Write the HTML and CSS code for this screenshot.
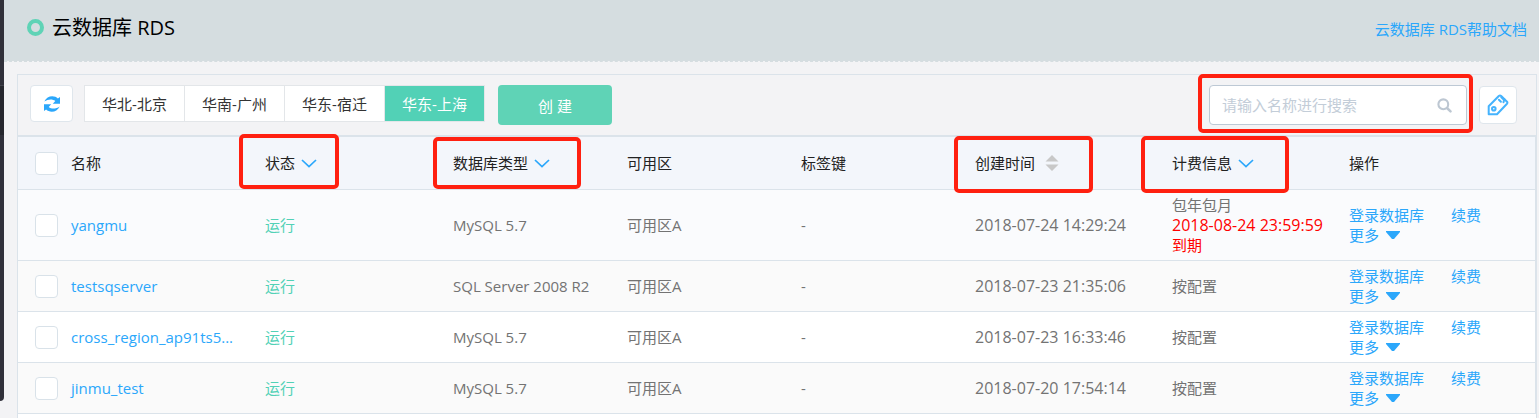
FILE: index.html
```html
<!DOCTYPE html>
<html lang="zh-CN">
<head>
<meta charset="utf-8">
<title>云数据库 RDS</title>
<link rel="stylesheet" href="styles.css">
</head>
<body>
<svg class="symbols" aria-hidden="true">
  <symbol id="chevron" viewBox="0 0 16 9"><path d="M1 1 8 7.6 15 1" fill="none" stroke="currentColor" stroke-width="1.7"/></symbol>
  <symbol id="caret" viewBox="0 0 14 8"><path d="M0 0H14V1L8 8H6L0 1Z" fill="currentColor"/></symbol>
</svg>
<div class="app">
  <aside class="rail"><div class="rail-active"></div></aside>
  <div class="page">
    <header class="header">
      <span class="ring"></span>
      <h1 class="title">云数据库 RDS</h1>
      <a class="help" href="#">云数据库 RDS帮助文档</a>
    </header>
    <main class="panel">
      <div class="toolbar">
        <button class="icon-button refresh" type="button" aria-label="刷新">
          <svg width="16" height="16" viewBox="0 0 16 16" fill="#2ba7fb"><path d="M.3 5.500C2 2 5 .300 8.200.300c2.300 0 4.300.700 5.700 2.100L16 1v6.700H8.800L11.300 5C8.500 2.800 4 3 .300 5.500Z"/><path d="M15.700 10.500C14 14 11 15.700 7.800 15.700c-2.300 0-4.300-.7-5.700-2.100L0 15V8.300H7.200L4.700 11C7.500 13.200 12 13 15.700 10.500Z"/></svg>
        </button>
        <div class="regions">
          <button class="region" type="button">华北-北京</button>
          <button class="region" type="button">华南-广州</button>
          <button class="region" type="button">华东-宿迁</button>
          <button class="region region-active" type="button">华东-上海</button>
        </div>
        <button class="create" type="button">创 建</button>
        <div class="search">
          <input class="search-input" type="text" placeholder="请输入名称进行搜索" aria-label="请输入名称进行搜索">
          <svg class="search-icon" width="15" height="15" viewBox="0 0 15 15" fill="none" stroke="#bdc7d2" stroke-linecap="round"><circle cx="6.300" cy="6.300" r="4.900" stroke-width="2.100"/><path d="M10 10 13.500 13.400" stroke-width="2.500"/></svg>
          <span class="mark mark-search"></span>
        </div>
        <button class="icon-button tag" type="button" aria-label="标签">
          <svg width="22" height="22" viewBox="0 0 22 22" fill="none" stroke="#45b3fd" stroke-width="2" stroke-linejoin="round" stroke-linecap="round"><path d="M1.700 12.300 11.800 2Q13 1 14.200 2L20 7.700Q20.800 8.700 20 9.700L10 20.300H1.700Z"/><circle cx="6.800" cy="14.800" r="1.800"/><path d="M11.900 5.800 13.900 7.800M14.300 3.200 17.500 6.400M17.300 5 16.500 8.300"/></svg>
        </button>
      </div>
      <table class="table">
        <colgroup><col class="c-check"><col class="c-name"><col class="c-status"><col class="c-mid"><col class="c-mid"><col class="c-mid"><col class="c-time"><col class="c-bill"><col></colgroup>
        <thead>
          <tr>
            <th class="check"><input class="box" type="checkbox" aria-label="全选"></th>
            <th>名称</th>
            <th><button class="filter" type="button">状态<svg class="chevron"><use href="#chevron"/></svg></button><span class="mark mark-status"></span></th>
            <th><button class="filter" type="button">数据库类型<svg class="chevron"><use href="#chevron"/></svg></button><span class="mark mark-type"></span></th>
            <th>可用区</th>
            <th>标签键</th>
            <th><button class="filter sort" type="button">创建时间<svg width="14" height="16" viewBox="0 0 14 16" fill="#c8c8c8"><path d="M7 0 13.500 6.500H.5ZM7 16 .5 9.500H13.500Z"/></svg></button><span class="mark mark-time"></span></th>
            <th><button class="filter" type="button">计费信息<svg class="chevron"><use href="#chevron"/></svg></button><span class="mark mark-bill"></span></th>
            <th>操作</th>
          </tr>
        </thead>
        <tbody>
          <tr class="hover">
            <td class="check"><input class="box" type="checkbox" aria-label="yangmu"></td>
            <td><a href="#">yangmu</a></td>
            <td class="running">运行</td>
            <td>MySQL 5.7</td>
            <td>可用区A</td>
            <td>-</td>
            <td class="time">2018-07-24 14:29:24</td>
            <td>包年包月<br><span class="time expires">2018-08-24 23:59:59</span><br><span class="expires">到期</span></td>
            <td><div class="actions"><a href="#">登录数据库</a><a href="#">续费</a></div><a class="more" href="#">更多<svg class="caret"><use href="#caret"/></svg></a></td>
          </tr>
          <tr>
            <td class="check"><input class="box" type="checkbox" aria-label="testsqserver"></td>
            <td><a href="#">testsqserver</a></td>
            <td class="running">运行</td>
            <td>SQL Server 2008 R2</td>
            <td>可用区A</td>
            <td>-</td>
            <td class="time">2018-07-23 21:35:06</td>
            <td>按配置</td>
            <td><div class="actions"><a href="#">登录数据库</a><a href="#">续费</a></div><a class="more" href="#">更多<svg class="caret"><use href="#caret"/></svg></a></td>
          </tr>
          <tr>
            <td class="check"><input class="box" type="checkbox" aria-label="cross_region_ap91ts5..."></td>
            <td><a href="#">cross_region_ap91ts5...</a></td>
            <td class="running">运行</td>
            <td>MySQL 5.7</td>
            <td>可用区A</td>
            <td>-</td>
            <td class="time">2018-07-23 16:33:46</td>
            <td>按配置</td>
            <td><div class="actions"><a href="#">登录数据库</a><a href="#">续费</a></div><a class="more" href="#">更多<svg class="caret"><use href="#caret"/></svg></a></td>
          </tr>
          <tr>
            <td class="check"><input class="box" type="checkbox" aria-label="jinmu_test"></td>
            <td><a href="#">jinmu_test</a></td>
            <td class="running">运行</td>
            <td>MySQL 5.7</td>
            <td>可用区A</td>
            <td>-</td>
            <td class="time">2018-07-20 17:54:14</td>
            <td>按配置</td>
            <td><div class="actions"><a href="#">登录数据库</a><a href="#">续费</a></div><a class="more" href="#">更多<svg class="caret"><use href="#caret"/></svg></a></td>
          </tr>
        </tbody>
      </table>
    </main>
  </div>
</div>
</body>
</html>
```

FILE: styles.css
```css
* { box-sizing: border-box; }
body {
  margin: 0;
  background: #f3f3f5;
  color: #737373;
  font: 15px/20px "Open Sans", "Noto Sans CJK SC", sans-serif;
}
button, input { font: inherit; margin: 0; }
button { padding: 0; cursor: pointer; }
a { color: #2ba7fb; text-decoration: none; }
svg { display: block; flex: none; }
.symbols { position: absolute; width: 0; height: 0; }

.app { display: flex; min-height: 100vh; }
.rail {
  flex: none;
  width: 4px;
  margin-bottom: 17px;
  padding-top: 85px;
  background: #30303a;
  border-bottom-right-radius: 4px;
}
.rail-active { height: 50px; background: #26272e; border-top: 1px solid #42434c; }
.page { display: flex; flex: 1; flex-direction: column; min-width: 0; }

.header {
  display: flex;
  align-items: center;
  height: 62px;
  padding: 0 12px 6px 23px;
  background: #d5dde0;
  background-clip: padding-box;
  border-bottom: 1px dashed #d5dde0;
}
.ring { width: 17px; height: 17px; border: 4px solid #5fd3b6; border-radius: 50%; }
.title { margin: 0 auto 0 8px; color: #000; font-size: 20px; font-weight: 400; line-height: 28px; }
.help { padding-top: 2px; }

.panel {
  flex: 1;
  margin: 12px 2px 0 13px;
  background: #fff;
  border: 1px solid #dbe3ea;
  border-bottom: 0;
}
.toolbar {
  display: flex;
  align-items: flex-start;
  padding: 10px 19px 10px 12px;
  background: #f3f3f5;
}
.icon-button {
  display: flex;
  align-items: center;
  justify-content: center;
  height: 37px;
  background: #fff;
  border: 1px solid #dfe6ec;
  border-radius: 4px;
}
.refresh { width: 43px; }
.tag { width: 38px; height: 38px; margin: 1px 0 0 12px; }
.regions { display: flex; margin: 0 13px 0 11px; border: 1px solid #e3e6e9; }
.region {
  width: 100px;
  height: 35px;
  background: #fff;
  border: 0;
  border-right: 1px solid #e3e6e9;
  color: #333;
}
.region-active { width: 99px; background: #52d1b6; border: 0; color: #fff; }
.create {
  width: 114px;
  height: 40px;
  padding-top: 2px;
  background: #5fd3b6;
  border: 0;
  border-radius: 4px;
  color: #fff;
}
.search { position: relative; width: 258px; margin-left: auto; }
.search-input {
  display: block;
  width: 100%;
  height: 40px;
  padding: 0 36px 0 12px;
  background: #fff;
  border: 1px solid #bdc9d5;
  border-radius: 4px;
  color: #333;
}
.search-input::placeholder { color: #c3cdd8; opacity: 1; }
.search-icon { position: absolute; right: 15px; top: 13px; }

.table {
  width: 100%;
  table-layout: fixed;
  border-collapse: separate;
  border-spacing: 0;
  border-top: 2px solid #dbe3ea;
  border-right: 1px solid #dbe3ea;
  background: #fff;
}
.c-check { width: 53px; }
.c-name { width: 194px; }
.c-status { width: 188px; }
.c-mid { width: 174px; }
.c-time { width: 197px; }
.c-bill { width: 177px; }
th, td { padding: 5px 0; border-bottom: 1px solid #dbe3ea; text-align: left; vertical-align: middle; }
th { position: relative; height: 53px; background: #f3f6fb; color: #222; font-weight: 400; }
td { white-space: nowrap; }
tbody tr:nth-child(even) { background: #fafafa; }
tbody .hover { background: #fafbfd; }
.check { padding-left: 17px; }
.box {
  display: block;
  appearance: none;
  width: 23px;
  height: 23px;
  background: #fff;
  border: 1px solid #d9e2e9;
  border-radius: 4px;
}
.time { font-size: 16px; }
.running { color: #52d1b6; }
.expires { color: #f00; }
.filter { display: flex; align-items: center; gap: 6px; background: none; border: 0; color: inherit; }
.sort { gap: 10px; }
.chevron { width: 16px; height: 9px; color: #2ba7fb; }
.actions { display: flex; gap: 27px; }
.more { display: flex; align-items: center; gap: 7px; }
.caret { width: 14px; height: 8px; }

.mark {
  position: absolute;
  z-index: 1;
  border: 4px solid #ff2010;
  border-radius: 5px;
  pointer-events: none;
}
.mark-search { inset: -11px -6px -8px -11px; }
.mark-status { left: -26px; top: -3px; width: 100px; height: 55px; }
.mark-type { left: -20px; top: 0; width: 148px; height: 52px; }
.mark-time { left: -21px; top: -1px; width: 139px; height: 57px; }
.mark-bill { left: -31px; top: -1px; width: 148px; height: 57px; }
```
